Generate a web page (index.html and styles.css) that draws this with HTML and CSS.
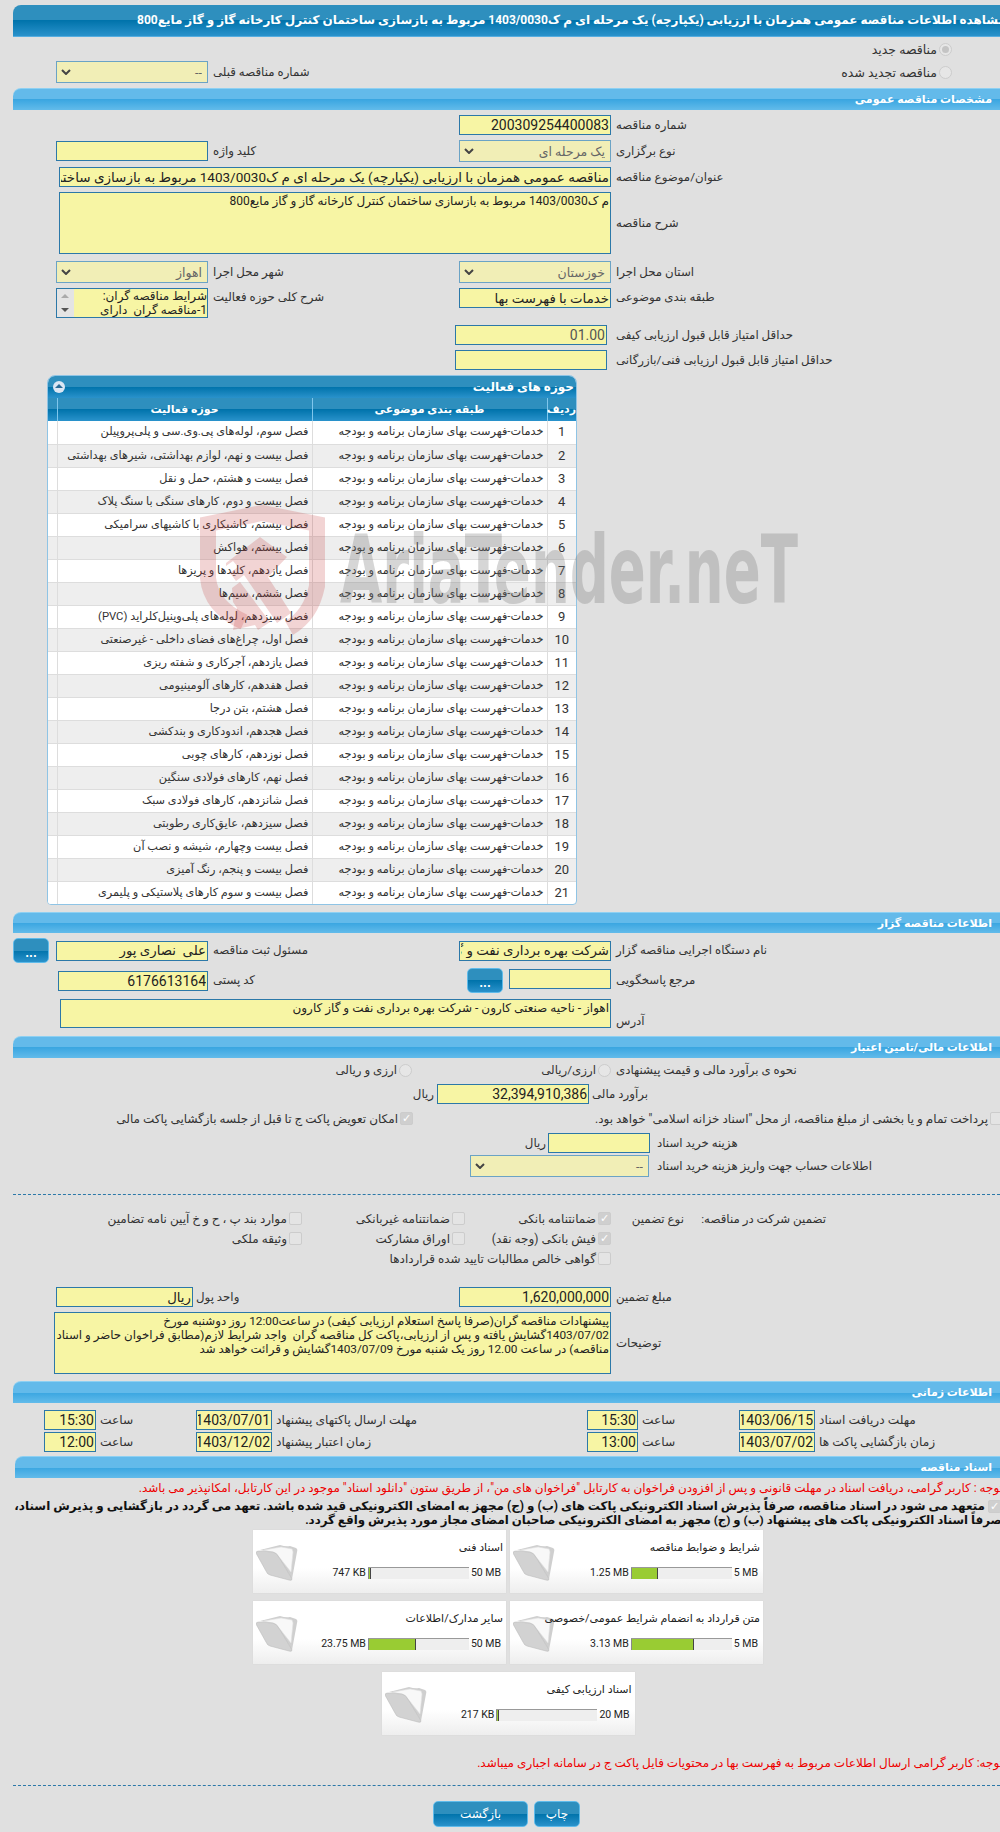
FILE: index.html
```html
<!DOCTYPE html>
<html lang="fa" dir="rtl">
<head>
<meta charset="utf-8">
<title>مشاهده اطلاعات مناقصه</title>
<link rel="stylesheet" href="styles.css">
</head>
<body>
<div class="page">
  <h1 class="title"><span>مشاهده اطلاعات مناقصه عمومی همزمان با ارزیابی (یکپارچه) یک مرحله ای م ک1403/0030 مربوط به بازسازی ساختمان کنترل کارخانه گاز و گاز مایع800</span></h1>

  <div class="frow h20 mt2">
    <label class="radio-item span2"><input type="radio" checked disabled><span>مناقصه جدید</span></label>
  </div>
  <div class="frow h22 mt2">
    <label class="radio-item span3"><input type="radio" disabled><span>مناقصه تجدید شده</span></label>
    <span class="lb">شماره مناقصه قبلی</span>
    <div class="sel"><select disabled><option>--</option></select><svg viewBox="0 0 10 6"><path d="M1 1l4 4 4-4"/></svg></div>
  </div>

  <h2 class="sec mt5">مشخصات مناقصه عمومی</h2>
  <div class="frow h20 mt5">
    <span class="lb">شماره مناقصه</span>
    <input class="in num" value="200309254400083" readonly>
  </div>
  <div class="frow h22 mt5">
    <span class="lb">نوع برگزاری</span>
    <div class="sel"><select disabled><option>یک مرحله ای</option></select><svg viewBox="0 0 10 6"><path d="M1 1l4 4 4-4"/></svg></div>
    <span class="lb">کلید واژه</span>
    <input class="in" readonly>
  </div>
  <div class="frow h20 mt5">
    <span class="lb">عنوان/موضوع مناقصه</span>
    <input class="in wide" value="مناقصه عمومی همزمان با ارزیابی (یکپارچه) یک مرحله ای م ک1403/0030 مربوط به بازسازی ساختمان کنترل کارخانه گاز و گاز مایع800" readonly>
  </div>
  <div class="frow h62 mt5">
    <span class="lb">شرح مناقصه</span>
    <textarea class="in wide" readonly>م ک1403/0030 مربوط به بازسازی ساختمان کنترل کارخانه گاز و گاز مایع800</textarea>
  </div>
  <div class="frow h22 mt7">
    <span class="lb">استان محل اجرا</span>
    <div class="sel"><select disabled><option>خوزستان</option></select><svg viewBox="0 0 10 6"><path d="M1 1l4 4 4-4"/></svg></div>
    <span class="lb">شهر محل اجرا</span>
    <div class="sel"><select disabled><option>اهواز</option></select><svg viewBox="0 0 10 6"><path d="M1 1l4 4 4-4"/></svg></div>
  </div>
  <div class="frow h30 mt5 top">
    <span class="lb">طبقه بندی موضوعی</span>
    <input class="in" value="خدمات با فهرست بها" readonly>
    <span class="lb">شرح کلی حوزه فعالیت</span>
    <div class="listbox">
      <div class="listtext">شرایط مناقصه گران:<br>1-مناقصه گران  دارای</div>
      <div class="sbar"><i class="up"></i><i class="down"></i></div>
    </div>
  </div>
  <div class="frow h20 mt7">
    <span class="lb">حداقل امتیاز قابل قبول ارزیابی کیفی</span>
    <input class="in shift num grey" value="01.00" readonly>
  </div>
  <div class="frow h20 mt5">
    <span class="lb">حداقل امتیاز قابل قبول ارزیابی فنی/بازرگانی</span>
    <input class="in shift" readonly>
  </div>

  <section class="panel">
    <header class="panel-head">
      <span>حوزه های فعالیت</span>
      <i class="collapse"></i>
    </header>
    <table class="grid">
      <thead>
        <tr><th class="c1">ردیف</th><th class="c2">طبقه بندی موضوعی</th><th class="c3">حوزه فعالیت</th><th class="c4"></th></tr>
      </thead>
      <tbody>
        <tr><td>1</td><td>خدمات-فهرست بهای سازمان برنامه و بودجه</td><td>فصل سوم، لوله‌های پی.وی.سی و پلی‌پروپیلن</td><td></td></tr>
        <tr><td>2</td><td>خدمات-فهرست بهای سازمان برنامه و بودجه</td><td>فصل بیست و نهم، لوازم بهداشتی، شیرهای بهداشتی</td><td></td></tr>
        <tr><td>3</td><td>خدمات-فهرست بهای سازمان برنامه و بودجه</td><td>فصل بیست و هشتم، حمل و نقل</td><td></td></tr>
        <tr><td>4</td><td>خدمات-فهرست بهای سازمان برنامه و بودجه</td><td>فصل بیست و دوم، کارهای سنگی با سنگ پلاک</td><td></td></tr>
        <tr><td>5</td><td>خدمات-فهرست بهای سازمان برنامه و بودجه</td><td>فصل بیستم، کاشیکاری با کاشیهای سرامیکی</td><td></td></tr>
        <tr><td>6</td><td>خدمات-فهرست بهای سازمان برنامه و بودجه</td><td>فصل بیستم، هواکش</td><td></td></tr>
        <tr><td>7</td><td>خدمات-فهرست بهای سازمان برنامه و بودجه</td><td>فصل یازدهم، کلیدها و پریزها</td><td></td></tr>
        <tr><td>8</td><td>خدمات-فهرست بهای سازمان برنامه و بودجه</td><td>فصل ششم، سیم‌ها</td><td></td></tr>
        <tr><td>9</td><td>خدمات-فهرست بهای سازمان برنامه و بودجه</td><td>فصل سیزدهم، لوله‌های پلی‌وینیل‌کلراید (PVC)</td><td></td></tr>
        <tr><td>10</td><td>خدمات-فهرست بهای سازمان برنامه و بودجه</td><td>فصل اول، چراغ‌های فضای داخلی - غیرصنعتی</td><td></td></tr>
        <tr><td>11</td><td>خدمات-فهرست بهای سازمان برنامه و بودجه</td><td>فصل یازدهم، آجرکاری و شفته ریزی</td><td></td></tr>
        <tr><td>12</td><td>خدمات-فهرست بهای سازمان برنامه و بودجه</td><td>فصل هفدهم، کارهای آلومینیومی</td><td></td></tr>
        <tr><td>13</td><td>خدمات-فهرست بهای سازمان برنامه و بودجه</td><td>فصل هشتم، بتن درجا</td><td></td></tr>
        <tr><td>14</td><td>خدمات-فهرست بهای سازمان برنامه و بودجه</td><td>فصل هجدهم، اندودکاری و بندکشی</td><td></td></tr>
        <tr><td>15</td><td>خدمات-فهرست بهای سازمان برنامه و بودجه</td><td>فصل نوزدهم، کارهای چوبی</td><td></td></tr>
        <tr><td>16</td><td>خدمات-فهرست بهای سازمان برنامه و بودجه</td><td>فصل نهم، کارهای فولادی سنگین</td><td></td></tr>
        <tr><td>17</td><td>خدمات-فهرست بهای سازمان برنامه و بودجه</td><td>فصل شانزدهم، کارهای فولادی سبک</td><td></td></tr>
        <tr><td>18</td><td>خدمات-فهرست بهای سازمان برنامه و بودجه</td><td>فصل سیزدهم، عایق‌کاری رطوبتی</td><td></td></tr>
        <tr><td>19</td><td>خدمات-فهرست بهای سازمان برنامه و بودجه</td><td>فصل بیست وچهارم، شیشه و نصب آن</td><td></td></tr>
        <tr><td>20</td><td>خدمات-فهرست بهای سازمان برنامه و بودجه</td><td>فصل بیست و پنجم، رنگ آمیزی</td><td></td></tr>
        <tr><td>21</td><td>خدمات-فهرست بهای سازمان برنامه و بودجه</td><td>فصل بیست و سوم کارهای پلاستیکی و پلیمری</td><td></td></tr>
      </tbody>
    </table>
  </section>

  <h2 class="sec s21 mt7">اطلاعات مناقصه گزار</h2>
  <div class="frow h25 mt5">
    <span class="lb">نام دستگاه اجرایی مناقصه گزار</span>
    <input class="in" value="شرکت بهره برداری نفت و گاز کارون" readonly>
    <span class="lb">مسئول ثبت مناقصه</span>
    <input class="in" value="علی  نصاری پور" readonly>
    <button class="btn dots" type="button">...</button>
  </div>
  <div class="frow h25 mt5">
    <span class="lb">مرجع پاسخگویی</span>
    <div class="with-btn"><input class="in short" readonly><button class="btn dots" type="button">...</button></div>
    <span class="lb">کد پستی</span>
    <input class="in postal num" value="6176613164" readonly>
  </div>
  <div class="frow h29 mt6">
    <span class="lb end">آدرس</span>
    <textarea class="in addr" readonly>اهواز - ناحیه صنعتی کارون - شرکت بهره برداری نفت و گاز کارون</textarea>
  </div>

  <h2 class="sec mt8">اطلاعات مالی/تامین اعتبار</h2>
  <div class="frow h18 mt3">
    <span class="lb">نحوه ی برآورد مالی و قیمت پیشنهادی</span>
    <label class="radio-item plain"><input type="radio" disabled><span>ارزی/ریالی</span></label>
    <label class="radio-item plain second"><input type="radio" disabled><span>ارزی و ریالی</span></label>
  </div>
  <div class="flexrow estimate">
    <span class="lbf">برآورد مالی</span>
    <input class="in est num" value="32,394,910,386" readonly>
    <span class="lbf">ریال</span>
  </div>
  <div class="flexrow checks">
    <label class="chk-item first"><input type="checkbox" disabled><span>پرداخت تمام و یا بخشی از مبلغ مناقصه، از محل "اسناد خزانه اسلامی" خواهد بود.</span></label>
    <label class="chk-item"><input type="checkbox" checked disabled><span>امکان تعویض پاکت ج تا قبل از جلسه بازگشایی پاکت مالی</span></label>
  </div>
  <div class="flexrow money h20 mt4">
    <span class="lbm">هزینه خرید اسناد</span>
    <input class="in doc" readonly>
    <span class="lbf">ریال</span>
  </div>
  <div class="flexrow money h22 mt2">
    <span class="lbm">اطلاعات حساب جهت واریز هزینه خرید اسناد</span>
    <div class="sel acc"><select disabled><option>--</option></select><svg viewBox="0 0 10 6"><path d="M1 1l4 4 4-4"/></svg></div>
  </div>
  <hr class="dash d1">

  <div class="guar">
    <span class="g-a">تضمین شرکت در مناقصه:</span>
    <span class="g-b">نوع تضمین</span>
    <label class="chk-item"><input type="checkbox" checked disabled><span>ضمانتنامه بانکی</span></label>
    <label class="chk-item"><input type="checkbox" disabled><span>ضمانتنامه غیربانکی</span></label>
    <label class="chk-item"><input type="checkbox" disabled><span>موارد بند پ ، ح و خ آیین نامه تضامین</span></label>
    <span></span><span></span>
    <label class="chk-item"><input type="checkbox" checked disabled><span>فیش بانکی (وجه نقد)</span></label>
    <label class="chk-item"><input type="checkbox" disabled><span>اوراق مشارکت</span></label>
    <label class="chk-item"><input type="checkbox" disabled><span>وثیقه ملکی</span></label>
    <span></span><span></span>
    <label class="chk-item g-wide"><input type="checkbox" disabled><span>گواهی خالص مطالبات تایید شده قراردادها</span></label>
  </div>

  <div class="frow h20 amount">
    <span class="lb">مبلغ تضمین</span>
    <input class="in num" value="1,620,000,000" readonly>
    <div class="unit-wrap"><span>واحد پول</span><input class="in unit" value="ریال" readonly></div>
  </div>
  <div class="frow h62 mt5">
    <span class="lb">توضیحات</span>
    <textarea class="in desc" readonly>پیشنهادات مناقصه گران(صرفا پاسخ استعلام ارزیابی کیفی) در ساعت12:00 روز دوشنبه مورخ
1403/07/02گشایش یافته و پس از ارزیابی،پاکت کل مناقصه گران  واجد شرایط لازم(مطابق فراخوان حاضر و اسناد
مناقصه) در ساعت 12.00 روز یک شنبه مورخ 1403/07/09گشایش و قرائت خواهد شد</textarea>
  </div>

  <h2 class="sec mt7">اطلاعات زمانی</h2>
  <div class="times">
    <span>مهلت دریافت اسناد</span><input class="in num" value="1403/06/15" readonly>
    <span>ساعت</span><input class="in num" value="15:30" readonly>
    <span>مهلت ارسال پاکتهای پیشنهاد</span><input class="in num" value="1403/07/01" readonly>
    <span>ساعت</span><input class="in num" value="15:30" readonly>
    <span>زمان بازگشایی پاکت ها</span><input class="in num" value="1403/07/02" readonly>
    <span>ساعت</span><input class="in num" value="13:00" readonly>
    <span>زمان اعتبار پیشنهاد</span><input class="in num" value="1403/12/02" readonly>
    <span>ساعت</span><input class="in num" value="12:00" readonly>
  </div>

  <h2 class="sec sec-docs">اسناد مناقصه</h2>
  <p class="red note1">توجه : کاربر گرامی، دریافت اسناد در مهلت قانونی و پس از افزودن فراخوان به کارتابل "فراخوان های من"، از طریق ستون "دانلود اسناد" موجود در این کارتابل، امکانپذیر می باشد.</p>
  <div class="pledge">
    <div class="pl1"><input type="checkbox" checked disabled><span>متعهد می شود در اسناد مناقصه، صرفاً پذیرش اسناد الکترونیکی پاکت های (ب) و (ج) مجهز به امضای الکترونیکی قید شده باشد. تعهد می گردد در بازگشایی و پذیرش اسناد،</span></div>
    <div class="pl2">صرفاً اسناد الکترونیکی پاکت های پیشنهاد (ب) و (ج) مجهز به امضای الکترونیکی صاحبان امضای مجاز مورد پذیرش واقع گردد.</div>
  </div>

  <div class="cards">
    <article class="card">
      <h3>شرایط و ضوابط مناقصه</h3>
      <svg class="folder" viewBox="0 0 42 38"><path class="fb" d="M4 7 24 2q6 2 10 1l6 2q2 1 1 4L36 36 20 10z"/><path class="fp" d="M8 7 25 4l11 2 1 3-2 20-15-19z"/><path class="ff" d="M0 10q0-2 3-2l14 1q4 1 7 7l12 20q0 2-3 1L14 32q-3-1-4-4z"/></svg>
      <div class="meter"><span class="limit">5 MB</span><div class="bar"><div class="fill" style="width:27%"></div></div><span class="used">1.25 MB</span></div>
    </article>
    <article class="card">
      <h3>اسناد فنی</h3>
      <svg class="folder" viewBox="0 0 42 38"><path class="fb" d="M4 7 24 2q6 2 10 1l6 2q2 1 1 4L36 36 20 10z"/><path class="fp" d="M8 7 25 4l11 2 1 3-2 20-15-19z"/><path class="ff" d="M0 10q0-2 3-2l14 1q4 1 7 7l12 20q0 2-3 1L14 32q-3-1-4-4z"/></svg>
      <div class="meter"><span class="limit">50 MB</span><div class="bar"><div class="fill" style="width:3%"></div></div><span class="used">747 KB</span></div>
    </article>
    <article class="card">
      <h3>متن قرارداد به انضمام شرایط عمومی/خصوصی</h3>
      <svg class="folder" viewBox="0 0 42 38"><path class="fb" d="M4 7 24 2q6 2 10 1l6 2q2 1 1 4L36 36 20 10z"/><path class="fp" d="M8 7 25 4l11 2 1 3-2 20-15-19z"/><path class="ff" d="M0 10q0-2 3-2l14 1q4 1 7 7l12 20q0 2-3 1L14 32q-3-1-4-4z"/></svg>
      <div class="meter"><span class="limit">5 MB</span><div class="bar"><div class="fill" style="width:63%"></div></div><span class="used">3.13 MB</span></div>
    </article>
    <article class="card">
      <h3>سایر مدارک/اطلاعات</h3>
      <svg class="folder" viewBox="0 0 42 38"><path class="fb" d="M4 7 24 2q6 2 10 1l6 2q2 1 1 4L36 36 20 10z"/><path class="fp" d="M8 7 25 4l11 2 1 3-2 20-15-19z"/><path class="ff" d="M0 10q0-2 3-2l14 1q4 1 7 7l12 20q0 2-3 1L14 32q-3-1-4-4z"/></svg>
      <div class="meter"><span class="limit">50 MB</span><div class="bar"><div class="fill" style="width:48%"></div></div><span class="used">23.75 MB</span></div>
    </article>
    <article class="card">
      <h3>اسناد ارزیابی کیفی</h3>
      <svg class="folder" viewBox="0 0 42 38"><path class="fb" d="M4 7 24 2q6 2 10 1l6 2q2 1 1 4L36 36 20 10z"/><path class="fp" d="M8 7 25 4l11 2 1 3-2 20-15-19z"/><path class="ff" d="M0 10q0-2 3-2l14 1q4 1 7 7l12 20q0 2-3 1L14 32q-3-1-4-4z"/></svg>
      <div class="meter"><span class="limit">20 MB</span><div class="bar"><div class="fill" style="width:3%"></div></div><span class="used">217 KB</span></div>
    </article>
  </div>

  <p class="red note2">توجه: کاربر گرامی ارسال اطلاعات مربوط به فهرست بها در محتویات فایل پاکت ج در سامانه اجباری میباشد.</p>
  <hr class="dash d2">
  <div class="actions">
    <button class="btn act print" type="button">چاپ</button>
    <button class="btn act back" type="button">بازگشت</button>
  </div>
</div>

<svg class="watermark" viewBox="0 0 610 140" aria-hidden="true">
  <path class="wm-shield" d="M52 122C30 112 18 98 16 78V24L70 13l55 11v62c-4 20-14 34-28 42"/>
  <path class="wm-mark" d="M34 63 68 37l27 20-19 20 23 36-14 10-33-48-8 6-6-8 8-6-5-6-7 5z"/>
  <path class="wm-mark" d="M40 88 48 82 78 122 66 130l-3-5-22 5 4-22-4-6z"/>
  <text class="wm-text" x="148" y="103" textLength="458" lengthAdjust="spacingAndGlyphs" direction="ltr">AriaTender.neT</text>
</svg>
</body>
</html>
```
FILE: styles.css
```css
*{box-sizing:border-box}
html,body{margin:0;padding:0}
body{width:1000px;height:1832px;overflow:hidden;position:relative;background:#e0e0e0;color:#333;font:11.8px/1.2 "Roboto","DejaVu Sans",sans-serif;direction:rtl}
.page{margin-left:13px;width:987px;padding-top:5px}
.title{margin:0;height:32px;overflow:hidden;border-radius:8px 0 0 0;background:linear-gradient(#2e8fbe 0 50%,#0073ab 50%,#2a92cb 100%);border-bottom:1px solid #55ade0;color:#fff;font-size:12px;font-weight:700;line-height:31px;white-space:nowrap}
.title span{display:block;margin-right:-6px}
.sec{margin:0;height:22px;border-radius:8px 0 0 0;background:linear-gradient(#63baea 0 50%,#3aa6e1 50%,#62bbea 100%);border-top:1px solid #8ed0f2;color:#fff;font-size:11px;font-weight:700;line-height:21px;padding-right:8px}
.s21{height:21px}
.sec-docs{margin-top:4px;margin-left:2px}
.mt2{margin-top:2px}.mt3{margin-top:3px}.mt4{margin-top:4px}.mt5{margin-top:5px}.mt6{margin-top:6px}.mt7{margin-top:7px}.mt8{margin-top:8px}
.h18{height:18px}.h20{height:20px}.h22{height:22px}.h25{height:25px}.h29{height:29px}.h30{height:30px}.h62{height:62px}
.frow{display:grid;grid-template-columns:384px 157px 246px 157px 43px;align-items:center}
.frow.top{align-items:start}
.frow.top .lb{padding-top:2px}
.lb{justify-self:end;text-align:left;white-space:nowrap;color:#333}
.in{display:block;height:20px;width:152px;justify-self:end;margin:0;padding:0 1px;background:#f7f5a4;border:1px solid #2c78a8;color:#222;font:13.3px/18px "Roboto","DejaVu Sans",sans-serif;direction:rtl;border-radius:0;outline:0;overflow:hidden}
textarea.in{resize:none;padding:1px;height:100%;font-size:12px;line-height:14px}
.num{font-size:14px}
.grey{color:#555}
.wide{grid-column:2/5;width:552px;margin-left:3px;font-size:13.5px}
textarea.wide{height:62px}
.shift{margin-left:-4px}
.sel{position:relative;width:152px;height:22px;justify-self:end}
.sel select{appearance:none;-webkit-appearance:none;display:block;width:100%;height:100%;margin:0;background:#f1eeb6;border:1px solid #6ba3c5;color:#666;opacity:1;font:12.5px "Roboto","DejaVu Sans",sans-serif;padding:0 5px 0 20px;direction:rtl;border-radius:0}
.sel svg{position:absolute;left:5px;top:8px;width:10px;height:6px;fill:none;stroke:#444;stroke-width:2}
.radio-item{display:flex;align-items:center;gap:2px;white-space:nowrap;padding-right:48px}
.radio-item.span2{grid-column:1/3;font-size:12.5px}
.radio-item.span3{grid-column:1/3;font-size:12.5px}
.radio-item.span3 + .lb{grid-column:3}
.radio-item input,.chk-item input{appearance:none;-webkit-appearance:none;flex:none;margin:0;background:#e6e6e6;border:1px solid #ccc;position:relative}
.radio-item input{width:13px;height:13px;border-radius:50%}
.radio-item input:checked::after{content:"";position:absolute;inset:2px;border-radius:50%;background:#c4c4c4}
.chk-item{display:flex;align-items:center;gap:2px;white-space:nowrap;font-size:12px}
.chk-item input{width:13px;height:13px;border-radius:2px;background:#e4e4e4}
.chk-item input:checked{background:#cfcfcf}
.chk-item input:checked::after{content:"✓";position:absolute;inset:0;color:#fff;font:700 11px/12px "DejaVu Sans",sans-serif;text-align:center}
.listbox{display:flex;width:152px;height:30px;justify-self:end;background:#f7f5a4;border:1px solid #2c78a8;overflow:hidden}
.listtext{flex:1;font-size:12px;line-height:14px;white-space:pre-wrap;color:#222}
.sbar{flex:none;width:17px;background:#e4e4e4;position:relative}
.sbar i{position:absolute;left:4px;width:0;height:0;border:4px solid transparent}
.sbar .up{top:1px;border-bottom-color:#aaa}
.sbar .down{bottom:1px;border-top-color:#555}
.panel{margin:5px 423px 0 0;width:530px;height:530px;border:1px solid #8fc4e5;border-radius:8px 8px 4px 4px;background:#fff;overflow:hidden}
.panel-head{display:flex;justify-content:space-between;align-items:center;height:22px;padding:0 2px 0 5px;background:linear-gradient(#2e8fbe 0 50%,#0073ab 50%,#2a92cb 100%);color:#fff;font-size:12px;font-weight:700}
.collapse{width:12px;height:12px;border-radius:50%;background:#dbe6f3;position:relative}
.collapse::after{content:"";position:absolute;left:2px;top:-1px;border:4px solid transparent;border-bottom-color:#2a6b96}
.grid{width:528px;border-collapse:collapse;table-layout:fixed;font-size:11.3px;color:#333}
.grid th{height:23px;padding:0;background:linear-gradient(#2e8fbe 0 50%,#0073ab 50%,#2a92cb 100%);border-left:1px solid #7fc6ec;color:#fff;font-weight:700;font-size:11px}
.c1{width:29px}.c2{width:235px}.c3{width:255px}.c4{width:9px}
.grid th.c4{border-left:0}
.grid td{height:23px;padding:0 3px;border-left:1px solid #ddd;border-bottom:1px solid #ddd;white-space:nowrap;overflow:hidden}
.grid td:first-child{text-align:center;font-size:13px}
.grid td:last-child{border-left:0;background:#fff}
.grid tbody tr:nth-child(even) td{background:#eee}
.btn{display:block;margin:0;padding:0;border:1px solid #5fbbea;border-radius:5px;background:linear-gradient(#2e8fbe 0 50%,#0073ab 50%,#2a92cb 100%);color:#fff;font:12px "DejaVu Sans",sans-serif}
.dots{width:36px;height:25px;justify-self:end;line-height:30px;font-weight:700;font-size:10px}
.with-btn{display:flex;gap:6px;align-items:flex-start;padding-right:5px;height:25px}
.short{width:102px;margin-top:1px}
.postal{width:150px;margin-left:2px}
.addr{grid-column:2/5;width:551px;margin-left:4px;height:29px}
.lb.end{align-self:end}
.radio-item.plain{padding-right:5px}
.radio-item.second{grid-column:3/5;padding-right:47px}
.flexrow{display:flex;align-items:center;white-space:nowrap}
.estimate{margin-top:5px;height:20px;padding-right:352px;gap:3px}
.est{width:152px;flex:none}
.checks{margin-top:5px;height:20px;margin-right:-3px}
.checks .first{width:590px}
.money{padding-right:122px;gap:7px}
.lbm{width:221px;text-align:left;flex:none}
.doc{width:102px;flex:none;margin-left:-5px}
.acc{width:179px;flex:none;margin-right:1px}
.dash{margin:0;border:0;border-top:1px dashed #2c78a8;height:0}
.d1{margin-top:17px}
.guar{display:grid;grid-template-columns:142px 73px 146px 163px 1fr;grid-auto-rows:20px;align-items:center;padding-right:174px;margin-top:14px}
.g-wide{grid-column:3/6}
.amount{margin-top:18px}
.unit-wrap{grid-column:3/5;display:flex;justify-content:flex-end;align-items:center;gap:3px;white-space:nowrap}
.unit{width:137px;flex:none}
textarea.desc{grid-column:2/5;width:557px;height:62px;margin-left:-2px;white-space:pre;font-size:11.8px}
.times{display:grid;grid-template-columns:185px 76px 101px 51px 315px 76px 100px 52px;grid-auto-rows:20px;row-gap:2px;align-items:center;margin-top:7px;white-space:nowrap;font-size:12.2px}
.times span{justify-self:end;padding-left:4px}
.times .in{width:100%}
.red{margin:0;color:#e00;white-space:nowrap;font-size:12px}
.note1{margin-top:2px;margin-right:-3px;height:16px;line-height:16px}
.pledge{font-weight:700;font-size:12px;line-height:13px;color:#111;white-space:nowrap;margin-top:2px;height:29px}
.pl1{display:flex;align-items:center;gap:3px;height:16px;margin-right:-1px}
.pl1 input{appearance:none;-webkit-appearance:none;position:relative;flex:none;margin:0;width:13px;height:13px;background:#cfcfcf;border:1px solid #ccc;border-radius:2px}
.pl1 input::after{content:"✓";position:absolute;inset:0;color:#fff;font:700 11px/12px "DejaVu Sans",sans-serif;text-align:center}
.pl2{margin-right:-2px;font-size:11.8px}
.cards{display:flex;flex-wrap:wrap;justify-content:center;gap:8px 4px;width:510px;margin:3px 237px 0 0}
.card{position:relative;width:253px;height:63px;background:linear-gradient(#fff 0 60%,#eee 100%);box-shadow:0 0 1px #ccc;padding:9px 3px 0 0}
.card h3{position:relative;z-index:1;margin:0;font-size:11px;font-weight:400;line-height:18px;color:#222;white-space:nowrap}
.folder{position:absolute;left:3px;top:13px;width:42px;height:38px}
.fb{fill:#cfcfcf}.fp{fill:#f8f8f8;stroke:#e2e2e2;stroke-width:.6}.ff{fill:#d2d2d2;stroke:#bcbcbc;stroke-width:.6}
.meter{position:absolute;right:5px;left:0;top:37px;display:flex;align-items:center;gap:2px;height:12px;font-size:10.5px;color:#222;white-space:nowrap}
.limit,.used{direction:ltr;unicode-bidi:isolate}
.bar{flex:none;width:101px;height:12px;background:#eee;border-top:1px solid #999;direction:ltr}
.fill{height:100%;background:#9c3;border-left:1px solid #888;border-right:1px solid #444}
.note2{margin-top:19px;margin-right:-3px;height:18px;line-height:18px}
.d2{margin-top:13px}
.actions{display:flex;gap:6px;margin:15px 420px 0 0}
.act{height:26px;font-size:12px}
.print{width:46px}
.back{width:95px}
.watermark{position:absolute;left:192px;top:500px;width:610px;height:140px;pointer-events:none}
.wm-shield{fill:none;stroke:#c43a3a;stroke-opacity:.22;stroke-width:16}
.wm-mark{fill:#c43a3a;fill-opacity:.22}
.wm-text{fill:#777;fill-opacity:.3;font:700 94px "DejaVu Sans Condensed","DejaVu Sans",sans-serif}
```
